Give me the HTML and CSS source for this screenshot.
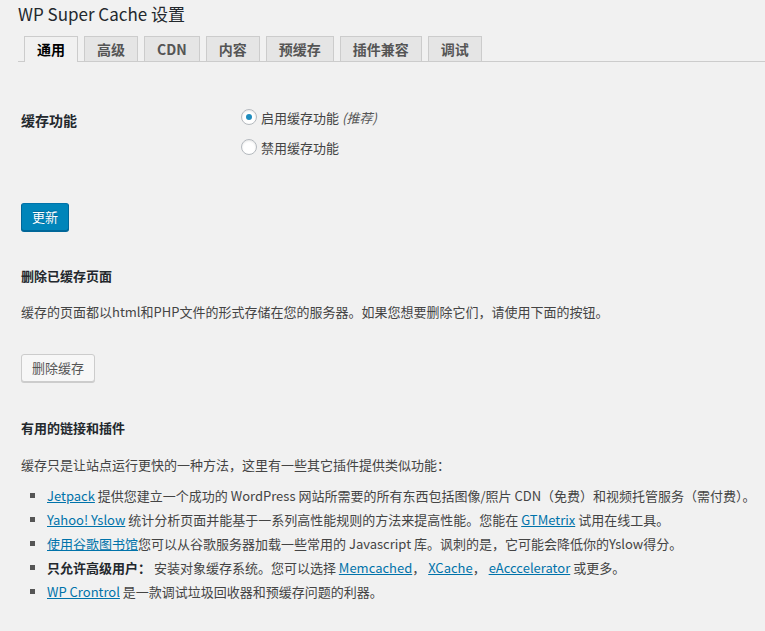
FILE: index.html
```html
<!DOCTYPE html>
<html lang="zh-CN">
<head>
<meta charset="utf-8">
<title>WP Super Cache 设置</title>
<link rel="stylesheet" href="styles.css">
</head>
<body>
<div class="wrap">
  <h1 class="title">WP Super Cache 设置</h1>
  <nav class="tabs">
    <a class="tab active">通用</a>
    <a class="tab">高级</a>
    <a class="tab">CDN</a>
    <a class="tab">内容</a>
    <a class="tab">预缓存</a>
    <a class="tab">插件兼容</a>
    <a class="tab">调试</a>
  </nav>
  <div class="layout">
    <div class="main">
      <div class="form-row">
        <div class="form-label">缓存功能</div>
        <div class="form-field">
          <label class="radio-line"><span class="radio checked"></span>启用缓存功能 <em class="hint">(推荐)</em></label>
          <label class="radio-line"><span class="radio"></span>禁用缓存功能</label>
        </div>
      </div>
      <button class="btn btn-primary">更新</button>

      <h3 class="section-title first">删除已缓存页面</h3>
      <p class="text p1">缓存的页面都以html和PHP文件的形式存储在您的服务器。如果您想要删除它们，请使用下面的按钮。</p>
      <button class="btn btn-secondary">删除缓存</button>

      <h3 class="section-title second">有用的链接和插件</h3>
      <p class="text p2">缓存只是让站点运行更快的一种方法，这里有一些其它插件提供类似功能：</p>
      <ul class="links">
        <li><a href="#">Jetpack</a> 提供您建立一个成功的 WordPress 网站所需要的所有东西包括图像/照片 CDN（免费）和视频托管服务（需付费）。</li>
        <li><a href="#">Yahoo! Yslow</a> 统计分析页面并能基于一系列高性能规则的方法来提高性能。您能在 <a href="#">GTMetrix</a> 试用在线工具。</li>
        <li><a href="#">使用谷歌图书馆</a>您可以从谷歌服务器加载一些常用的 Javascript 库。讽刺的是，它可能会降低你的Yslow得分。</li>
        <li><strong>只允许高级用户：</strong> 安装对象缓存系统。您可以选择 <a href="#">Memcached</a>， <a href="#">XCache</a>， <a href="#">eAcccelerator</a> 或更多。</li>
        <li><a href="#">WP Crontrol</a> 是一款调试垃圾回收器和预缓存问题的利器。</li>
      </ul>
    </div>
    <aside class="side-box"></aside>
  </div>
</div>
</body>
</html>
```

FILE: styles.css
```css
html, body {
  margin: 0;
  padding: 0;
  overflow: hidden;
  background: #f1f1f1;
}
body {
  font-family: "Noto Sans CJK SC", "Noto Sans", sans-serif;
  font-size: 13px;
  color: #444;
  width: 765px;
  height: 631px;
}
.wrap {
  padding-left: 18px;
}
.title {
  margin: 0;
  padding-top: 2px;
  font-size: 17px;
  font-weight: 400;
  line-height: 24px;
  color: #23282d;
}
.tabs {
  display: flex;
  margin-top: 10px;
  padding-left: 6px;
  border-bottom: 1px solid #ccc;
  gap: 6px;
  height: 25px;
}
.tab {
  display: block;
  height: 24px;
  line-height: 24px;
  padding: 0 12px;
  border: 1px solid #ccc;
  border-bottom: 0;
  background: #e5e5e5;
  color: #555;
  font-size: 14px;
  font-weight: 600;
  white-space: nowrap;
}
.tab.active {
  background: #f1f1f1;
  color: #000;
  height: 25px;
  margin-bottom: -1px;
}
.layout {
  display: flex;
  align-items: flex-start;
}
.main {
  flex: 0 0 730px;
  padding-left: 3px;
}
.side-box {
  flex: 0 0 1px;
  margin-left: 11px;
  margin-top: 22px;
  height: 346px;
  border: 1px solid #2e2e22;
  border-right: 0;
  background: #f1f1f1;
}
.form-row {
  display: flex;
  margin-top: 40px;
}
.form-label {
  width: 220px;
  padding-top: 8px;
  font-size: 14px;
  font-weight: 600;
  line-height: 20px;
  color: #23282d;
}
.form-field {
  display: flex;
  flex-direction: column;
}
.radio-line {
  display: flex;
  align-items: center;
  height: 30px;
  font-size: 13px;
  color: #444;
}
.radio {
  box-sizing: border-box;
  width: 16px;
  height: 16px;
  border: 1px solid #b4b9be;
  border-radius: 50%;
  background: #fff;
  box-shadow: inset 0 1px 2px rgba(0,0,0,0.1);
  margin-right: 4px;
  display: flex;
  align-items: center;
  justify-content: center;
}
.radio.checked::after {
  content: "";
  width: 6px;
  height: 6px;
  border-radius: 50%;
  background: #1e8cbe;
}
.hint {
  color: #555;
  margin-left: 3px;
}
.btn {
  display: block;
  box-sizing: border-box;
  height: 28px;
  padding: 0 10px 1px;
  font-family: inherit;
  font-size: 13px;
  line-height: 26px;
  border-radius: 3px;
  border: 1px solid;
  cursor: pointer;
}
.btn-primary {
  margin-top: 41px;
  width: 48px;
  background: #0085ba;
  border-color: #0073aa #006799 #006799;
  box-shadow: 0 1px 0 #006799;
  color: #fff;
  text-shadow: 0 -1px 1px #006799;
}
.btn-secondary {
  margin-top: 32px;
  width: 74px;
  background: #f7f7f7;
  border-color: #ccc;
  box-shadow: 0 1px 0 #ccc;
  color: #555;
}
.section-title {
  margin: 0;
  font-size: 13px;
  font-weight: 700;
  line-height: 20px;
  color: #23282d;
}
.section-title.first { margin-top: 35px; }
.section-title.second { margin-top: 36px; }
.text {
  margin: 0;
  line-height: 20px;
}
.p1 { margin-top: 16px; }
.p2 { margin-top: 17px; }
.links {
  margin: 9px 0 0;
  padding-left: 26px;
  list-style: square;
}
.links li {
  line-height: 24px;
  white-space: nowrap;
}
.links li::marker {
  color: #555;
}
.links a {
  color: #0073aa;
  text-decoration: underline;
}
.links strong {
  font-weight: 700;
  color: #23282d;
}
```
